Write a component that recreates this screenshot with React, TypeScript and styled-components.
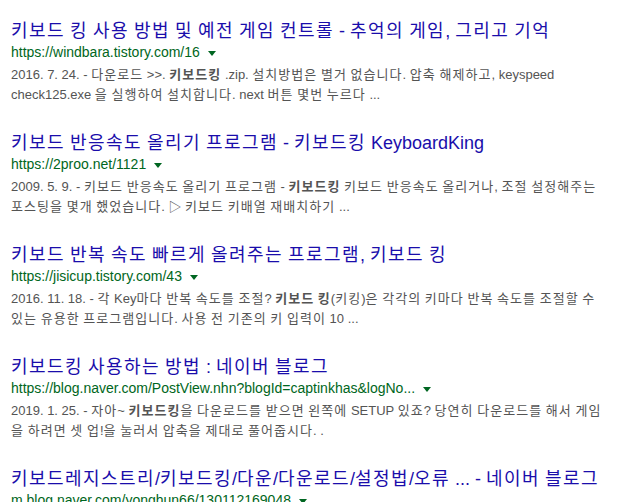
import React from 'react'
import styled, { createGlobalStyle } from 'styled-components'

const GlobalStyle = createGlobalStyle`
  html, body {
    margin: 0;
    padding: 0;
    background: #fff;
  }
  body {
    font-family: "Liberation Sans", Arial, "Noto Sans CJK KR", sans-serif;
  }
`

type Result = {
  title: string
  url: string
  lines: string[]
}

// ** marks bold words in the snippet
const results: Result[] = [
  {
    title: '키보드 킹 사용 방법 및 예전 게임 컨트롤 - 추억의 게임, 그리고 기억',
    url: 'https://windbara.tistory.com/16',
    lines: [
      '2016. 7. 24. - 다운로드 >>. **키보드킹** .zip. 설치방법은 별거 없습니다. 압축 해제하고, keyspeed',
      'check125.exe 을 실행하여 설치합니다. next 버튼 몇번 누르다 ...',
    ],
  },
  {
    title: '키보드 반응속도 올리기 프로그램 - 키보드킹 KeyboardKing',
    url: 'https://2proo.net/1121',
    lines: [
      '2009. 5. 9. - 키보드 반응속도 올리기 프로그램 - **키보드킹** 키보드 반응속도 올리거나, 조절 설정해주는',
      '포스팅을 몇개 했었습니다. ▷ 키보드 키배열 재배치하기 ...',
    ],
  },
  {
    title: '키보드 반복 속도 빠르게 올려주는 프로그램, 키보드 킹',
    url: 'https://jisicup.tistory.com/43',
    lines: [
      '2016. 11. 18. - 각 Key마다 반복 속도를 조절? **키보드 킹**(키킹)은 각각의 키마다 반복 속도를 조절할 수',
      '있는 유용한 프로그램입니다. 사용 전 기존의 키 입력이 10 ...',
    ],
  },
  {
    title: '키보드킹 사용하는 방법 : 네이버 블로그',
    url: 'https://blog.naver.com/PostView.nhn?blogId=captinkhas&logNo...',
    lines: [
      '2019. 1. 25. - 자아~ **키보드킹**을 다운로드를 받으면 왼쪽에 SETUP 있죠? 당연히 다운로드를 해서 게임',
      '을 하려면 셋 업!을 눌러서 압축을 제대로 풀어줍시다. .',
    ],
  },
  {
    title: '키보드레지스트리/키보드킹/다운/다운로드/설정법/오류 ... - 네이버 블로그',
    url: 'm.blog.naver.com/yonghun66/130112169048',
    lines: [],
  },
]

// hangul glyphs are a bit wider in the original font
const hangul = (text: string) =>
  text.split(/([\u3131-\uD79D]+)/).map((part, i) =>
    i % 2 === 1 ? <Ko key={i}>{part}</Ko> : part
  )

const rich = (text: string) =>
  text.split('**').map((part, i) =>
    i % 2 === 1 ? <b key={i}>{hangul(part)}</b> : <React.Fragment key={i}>{hangul(part)}</React.Fragment>
  )

const App = () => {
  return (
    <Page>
      <GlobalStyle />
      {results.map((r) => (
        <Item key={r.url}>
          <Title href="#">{hangul(r.title)}</Title>
          <UrlRow>
            <Url>{r.url}</Url>
            <Arrow />
          </UrlRow>
          {r.lines.length > 0 && (
            <Snippet>
              {r.lines.map((l, i) => (
                <Line key={i}>{rich(l)}</Line>
              ))}
            </Snippet>
          )}
        </Item>
      ))}
    </Page>
  )
}

export default App

const Page = styled.div`
  width: 632px;
  height: 502px;
  overflow: hidden;
  padding: 20px 0 0 11px;
  box-sizing: border-box;
  display: flex;
  flex-direction: column;
  gap: 27px;
`

const Item = styled.div`
  display: flex;
  flex-direction: column;
`

const Ko = styled.span`
  letter-spacing: 0.08em;
`

const Title = styled.a`
  font-size: 18px;
  line-height: 22px;
  color: #1a0dab;
  text-decoration: none;
  white-space: nowrap;
`

const UrlRow = styled.div`
  display: flex;
  align-items: center;
  height: 20px;
`

const Url = styled.cite`
  font-style: normal;
  font-size: 14px;
  line-height: 20px;
  color: #006621;
  white-space: nowrap;
`

const Arrow = styled.span`
  width: 0;
  height: 0;
  margin-left: 8px;
  margin-top: 2px;
  border-left: 4px solid transparent;
  border-right: 4px solid transparent;
  border-top: 5px solid #006621;
`

const Snippet = styled.div`
  margin-top: 3px;
  font-size: 13px;
  line-height: 20px;
  color: #545454;
  b {
    font-weight: bold;
    color: #545454;
  }
`

const Line = styled.div`
  white-space: nowrap;
`
